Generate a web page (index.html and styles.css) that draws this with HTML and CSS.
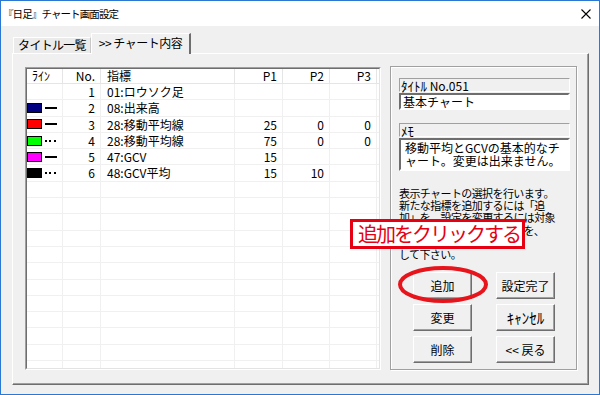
FILE: index.html
```html
<!DOCTYPE html>
<html lang="ja">
<head>
<meta charset="utf-8">
<title>『日足』チャート画面設定</title>
<link rel="stylesheet" href="styles.css">
</head>
<body>
<div class="window">
  <div class="titlebar">
    <span class="title">『日足』チャート画面設定</span>
    <svg class="close" width="10" height="10" viewBox="0 0 10 10"><path d="M0.5 0.5L9.5 9.5M9.5 0.5L0.5 9.5" stroke="#000" stroke-width="1.1" fill="none"/></svg>
  </div>
  <div class="client">
    <div class="tabs">
      <div class="tab">タイトル一覧</div>
      <div class="tab active">&gt;&gt; チャート内容</div>
    </div>
    <div class="panel">
      <div class="list">
        <div class="list-in">
          <div class="lrow lhead">
            <div class="c hkc">ﾗｲﾝ</div><div class="c r">No.</div><div class="c t">指標</div><div class="c r">P1</div><div class="c r">P2</div><div class="c r">P3</div><div class="c e"></div>
          </div>
          <div class="lrow">
            <div class="c ln"></div><div class="c r">1</div><div class="c t">01:ロウソク足</div><div class="c r"></div><div class="c r"></div><div class="c r"></div><div class="c e"></div>
          </div>
          <div class="lrow">
            <div class="c ln"><span class="sw navy"></span><span class="solid"></span></div><div class="c r">2</div><div class="c t">08:出来高</div><div class="c r"></div><div class="c r"></div><div class="c r"></div><div class="c e"></div>
          </div>
          <div class="lrow">
            <div class="c ln"><span class="sw red"></span><span class="solid"></span></div><div class="c r">3</div><div class="c t">28:移動平均線</div><div class="c r">25</div><div class="c r">0</div><div class="c r">0</div><div class="c e"></div>
          </div>
          <div class="lrow">
            <div class="c ln"><span class="sw lime"></span><span class="dots"></span></div><div class="c r">4</div><div class="c t">28:移動平均線</div><div class="c r">75</div><div class="c r">0</div><div class="c r">0</div><div class="c e"></div>
          </div>
          <div class="lrow">
            <div class="c ln"><span class="sw magenta"></span><span class="solid"></span></div><div class="c r">5</div><div class="c t">47:GCV</div><div class="c r">15</div><div class="c r"></div><div class="c r"></div><div class="c e"></div>
          </div>
          <div class="lrow">
            <div class="c ln"><span class="sw black"></span><span class="dots"></span></div><div class="c r">6</div><div class="c t">48:GCV平均</div><div class="c r">15</div><div class="c r">10</div><div class="c r"></div><div class="c e"></div>
          </div>
          <div class="lrow"><div class="c"></div><div class="c"></div><div class="c"></div><div class="c"></div><div class="c"></div><div class="c"></div><div class="c e"></div></div>
          <div class="lrow"><div class="c"></div><div class="c"></div><div class="c"></div><div class="c"></div><div class="c"></div><div class="c"></div><div class="c e"></div></div>
          <div class="lrow"><div class="c"></div><div class="c"></div><div class="c"></div><div class="c"></div><div class="c"></div><div class="c"></div><div class="c e"></div></div>
          <div class="lrow"><div class="c"></div><div class="c"></div><div class="c"></div><div class="c"></div><div class="c"></div><div class="c"></div><div class="c e"></div></div>
          <div class="lrow"><div class="c"></div><div class="c"></div><div class="c"></div><div class="c"></div><div class="c"></div><div class="c"></div><div class="c e"></div></div>
          <div class="lrow"><div class="c"></div><div class="c"></div><div class="c"></div><div class="c"></div><div class="c"></div><div class="c"></div><div class="c e"></div></div>
          <div class="lrow"><div class="c"></div><div class="c"></div><div class="c"></div><div class="c"></div><div class="c"></div><div class="c"></div><div class="c e"></div></div>
          <div class="lrow"><div class="c"></div><div class="c"></div><div class="c"></div><div class="c"></div><div class="c"></div><div class="c"></div><div class="c e"></div></div>
          <div class="lrow"><div class="c"></div><div class="c"></div><div class="c"></div><div class="c"></div><div class="c"></div><div class="c"></div><div class="c e"></div></div>
          <div class="lrow"><div class="c"></div><div class="c"></div><div class="c"></div><div class="c"></div><div class="c"></div><div class="c"></div><div class="c e"></div></div>
          <div class="lrow"><div class="c"></div><div class="c"></div><div class="c"></div><div class="c"></div><div class="c"></div><div class="c"></div><div class="c e"></div></div>
          <div class="lrow"><div class="c"></div><div class="c"></div><div class="c"></div><div class="c"></div><div class="c"></div><div class="c"></div><div class="c e"></div></div>
        </div>
      </div>
      <div class="group">
        <div class="lbl"><span class="hk">ﾀｲﾄﾙ</span> No.051</div>
        <div class="tb">基本チャート</div>
        <div class="lbl lbl2"><span class="hk">ﾒﾓ</span></div>
        <div class="tb memo">移動平均とGCVの基本的なチ<br>ャート。変更は出来ません。</div>
        <div class="desc">表示チャートの選択を行います。<br>新たな指標を追加するには「追<br>加」を、設定を変更するには対象<br>の指標を選択して「変更」を、<br>削除するには「削除」を押<br>して下さい。</div>
        <div class="btns">
          <div class="btn">追加</div>
          <div class="btn">設定完了</div>
          <div class="btn">変更</div>
          <div class="btn"><span class="hk hk-btn">ｷｬﾝｾﾙ</span></div>
          <div class="btn">削除</div>
          <div class="btn">&lt;&lt; 戻る</div>
        </div>
      </div>
    </div>
  </div>
  <div class="callout">追加をクリックする</div>
  <svg class="ring" width="94" height="40" viewBox="0 0 94 40"><ellipse cx="47" cy="19.5" rx="43" ry="16.5" fill="none" stroke="#e8141c" stroke-width="4"/></svg>
</div>
</body>
</html>
```
FILE: styles.css
```css
html, body {
  margin: 0;
  padding: 0;
}
body {
  width: 600px;
  height: 395px;
  overflow: hidden;
  font-family: "Noto Sans CJK JP", "Noto Sans", sans-serif;
  font-size: 12px;
  color: #000;
  background: #f0f0f0;
}
.window {
  position: relative;
  box-sizing: border-box;
  width: 600px;
  height: 395px;
  border: 1px solid #2b78d2;
  background: #f0f0f0;
  display: flex;
  flex-direction: column;
}
.titlebar {
  flex: none;
  height: 25px;
  background: #fff;
  display: flex;
  align-items: center;
  justify-content: space-between;
  padding: 0 8px 0 2px;
}
.title {
  font-size: 10.5px;
  letter-spacing: -0.9px;
  line-height: 14px;
}
.close {
  display: block;
}
.client {
  flex: 1;
  display: flex;
  flex-direction: column;
  padding: 7px 10px 9px 11px;
  min-height: 0;
}
.tabs {
  flex: none;
  height: 20px;
  display: flex;
  align-items: flex-end;
  padding-left: 1px;
  position: relative;
  z-index: 1;
}
.tab {
  box-sizing: border-box;
  height: 16px;
  width: 78px;
  border-top: 1px solid #fff;
  border-left: 1px solid #fff;
  border-right: 1px solid #c8c8c8;
  background: #ebebeb;
  font-size: 12px;
  letter-spacing: -0.7px;
  line-height: 14px;
  text-align: center;
}
.tab.active {
  height: 21px;
  width: 100px;
  margin-bottom: -1px;
  background: #f0f0f0;
  border-right: 2px solid #6e6e6e;
  line-height: 18px;
  letter-spacing: -0.5px;
}
.panel {
  flex: 1;
  min-height: 0;
  box-sizing: border-box;
  border: 1px solid;
  border-color: #fff #6e6e6e #6e6e6e #fff;
  box-shadow: inset -1px -1px 0 #a0a0a0;
  display: flex;
  gap: 9px;
  padding: 13px 11px 14px 12px;
}
.list {
  flex: none;
  width: 356px;
  box-sizing: border-box;
  border: 1px solid;
  border-color: #a0a0a0 #fff #fff #a0a0a0;
  display: flex;
}
.list-in {
  flex: 1;
  border: 1px solid;
  border-color: #6e6e6e #e3e3e3 #e3e3e3 #6e6e6e;
  background: #fff;
  overflow: hidden;
}
.lrow {
  display: grid;
  grid-template-columns: 36px 38px 134px 48px 47px 47px 2px;
  box-sizing: border-box;
  height: 16.3px;
  border-bottom: 1px solid #f0f0f0;
}
.lhead {
  height: 15px;
  border-bottom: 1px solid #e5e5e5;
}
.c {
  box-sizing: border-box;
  border-right: 1px solid #f0f0f0;
  white-space: nowrap;
  line-height: 15px;
  font-size: 12px;
  padding: 0 5px;
}
.lhead .c {
  border-right-color: #e5e5e5;
  line-height: 14px;
}
.c.r {
  text-align: right;
  padding-right: 5px;
}
.c.t {
  padding-left: 6px;
}
.c.e {
  border-right: none;
  padding: 0;
}
.c.ln {
  padding: 0;
  display: flex;
  align-items: center;
  gap: 3px;
}
.hk {
  font-size: 13px;
  line-height: 1;
}
.hk-btn {
  font-size: 15px;
}
.sw {
  box-sizing: border-box;
  width: 15px;
  height: 10px;
  border: 1px solid #000;
}
.sw.navy { background: #000080; }
.sw.red { background: #ff0000; }
.sw.lime { background: #00ff00; }
.sw.magenta { background: #ff00ff; }
.sw.black { background: #000; }
.solid {
  width: 12px;
  height: 2px;
  background: #000;
}
.dots {
  width: 11px;
  height: 2px;
  background: repeating-linear-gradient(to right, #000 0 2px, transparent 2px 4.5px);
}
.group {
  flex: 1;
  margin-top: -1px;
  box-sizing: border-box;
  border: 1px solid #a0a0a0;
  box-shadow: inset 1px 1px 0 #fff, 1px 1px 0 #fff;
  padding: 11px 6px 0 8px;
  display: flex;
  flex-direction: column;
}
.lbl {
  box-sizing: border-box;
  height: 14px;
  border: 1px solid;
  border-color: #a0a0a0 #fff #fff #a0a0a0;
  font-size: 12px;
  line-height: 12px;
  padding-left: 1px;
  white-space: nowrap;
}
.lbl2 {
  margin-top: 13px;
}
.tb {
  box-sizing: border-box;
  margin-top: 1px;
  height: 17px;
  border: 2px solid;
  border-color: #6e6e6e #fff #fff #6e6e6e;
  background: #fff;
  font-size: 12px;
  line-height: 13px;
  padding-left: 2px;
  white-space: nowrap;
}
.tb.memo {
  height: 33px;
  padding: 1px 0 0 4px;
  line-height: 13px;
}
.desc {
  margin-top: 16px;
  font-size: 11px;
  letter-spacing: -0.6px;
  line-height: 12.2px;
  white-space: nowrap;
}
.btns {
  margin-top: 12px;
  padding-left: 14px;
  display: grid;
  grid-template-columns: 59px 59px;
  grid-auto-rows: 27px;
  column-gap: 24px;
  row-gap: 5px;
}
.btn {
  box-sizing: border-box;
  border: 1px solid;
  border-color: #fff #6e6e6e #6e6e6e #fff;
  box-shadow: inset -1px -1px 0 #a0a0a0;
  background: #f0f0f0;
  display: flex;
  align-items: center;
  justify-content: center;
  font-size: 12px;
  white-space: nowrap;
}
.callout {
  position: absolute;
  left: 349px;
  top: 218px;
  width: 175px;
  height: 30px;
  box-sizing: border-box;
  border: 3px solid #e60012;
  background: #fff;
  color: #e60012;
  font-size: 20px;
  letter-spacing: -2px;
  line-height: 23px;
  padding-left: 5px;
  white-space: nowrap;
}
.ring {
  position: absolute;
  left: 395px;
  top: 264px;
}
```
